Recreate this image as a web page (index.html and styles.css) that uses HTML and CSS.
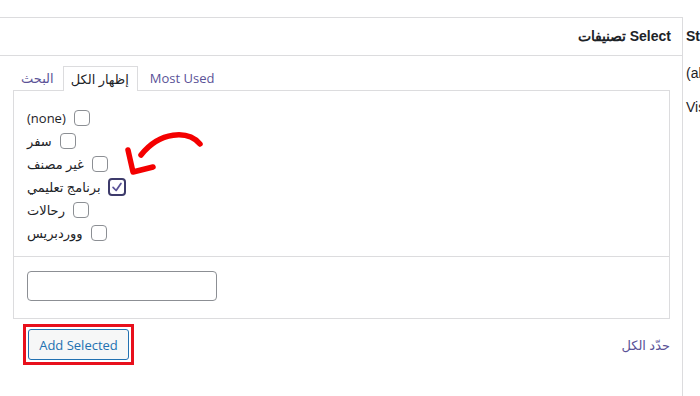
FILE: index.html
```html
<!DOCTYPE html>
<html lang="ar">

<head>
    <meta charset="UTF-8">
    <meta name="viewport" content="width=device-width, initial-scale=1.0">
    <title>Select تصنيفات</title>
    <link rel="stylesheet" href="styles.css">
</head>

<body>
    <div class="page">
        <div class="panel">
            <div class="panel-head" dir="rtl">Select تصنيفات</div>
            <div class="panel-body">
                <ul class="tabs">
                    <li><a href="#">البحث</a></li>
                    <li class="active"><span>إظهار الكل</span></li>
                    <li><a href="#">Most Used</a></li>
                </ul>
                <ul class="tabs-panel">
                    <li><span>(none)</span><i class="box"></i></li>
                    <li><span>سفر</span><i class="box"></i></li>
                    <li><span>غير مصنف</span><i class="box"></i></li>
                    <li><span>برنامج تعليمي</span><i class="box checked"><svg viewBox="0 0 16 16"><path d="M3.5 8.5 L7 12 L12.5 4"/></svg></i></li>
                    <li><span>رحالات</span><i class="box"></i></li>
                    <li><span>ووردبريس</span><i class="box"></i></li>
                </ul>
                <div class="search-box">
                    <input type="text" class="search-input">
                </div>
                <div class="actions">
                    <span class="highlight"><button class="button">Add Selected</button></span>
                    <a href="#" class="select-all">حدّد الكل</a>
                </div>

                <!-- annotation arrow -->
                <svg class="arrow" viewBox="0 0 90 55">
                    <path d="M80 19 C68 5 40 6 21 30" />
                    <path d="M8 25 L13 47 L33 42" />
                </svg>
            </div>
        </div>
        <div class="side">
            <p class="side-title">Status</p>
            <p>(all)</p>
            <p>Visibility</p>
        </div>
    </div>
</body>

</html>
```

FILE: styles.css
```css
:root {
    --border-color: #dcdcde;
    --link-color: #5a5297;
    --blue: #2271b1;
}

body {
    margin: 0;
    font-family: 'Open Sans', 'DejaVu Sans', sans-serif;
    font-size: 13px;
    color: #1d2327;
    background: #fff;
    overflow: hidden;
}

.page {
    display: flex;
    padding-top: 17px;
    width: 700px;
    height: 379px;
    overflow: hidden;
}

.panel {
    width: 682px;
    flex: none;
    margin-left: -1px;
    border: 1px solid var(--border-color);
    border-bottom: none;
}

.panel-head {
    height: 37px;
    line-height: 37px;
    padding: 0 11px;
    border-bottom: 1px solid var(--border-color);
    font-family: 'Liberation Sans', Arial, sans-serif;
    font-size: 14px;
    font-weight: 700;
    text-align: right;
}

.panel-body {
    position: relative;
    padding: 9px 12px 0 13px;
}

/* tabs */
.tabs {
    display: flex;
    list-style: none;
    margin: 0;
    padding: 0 0 0 1px;
    height: 25px;
}

.tabs li {
    display: flex;
    align-items: center;
    padding: 0 6px;
    margin-right: 2px;
    border: 1px solid transparent;
    border-bottom: none;
}

.tabs li.active {
    border-color: var(--border-color);
    background: #fff;
    position: relative;
    top: 1px;
    height: 24px;
    padding: 0 8px 0 7px;
    margin-right: 3px;
}

.tabs li.active+li {
    padding-left: 8px;
}

.tabs a {
    color: var(--link-color);
    text-decoration: none;
}

.tabs-panel {
    list-style: none;
    margin: 0;
    padding: 15px 13px 12px;
    border: 1px solid var(--border-color);
}

.tabs-panel li {
    display: flex;
    align-items: center;
    height: 23px;
}

.box {
    box-sizing: border-box;
    width: 16px;
    height: 16px;
    margin-left: 8px;
    border: 1px solid #8c8f94;
    border-radius: 4px;
    background: #fff;
}

.box.checked {
    width: 18px;
    height: 18px;
    border: 2px solid #3d3b6b;
    margin-left: 7px;
    margin-top: 1px;
}

.box svg {
    display: block;
    width: 14px;
    height: 14px;
    fill: none;
    stroke: #5a5297;
    stroke-width: 2;
    stroke-linecap: round;
    stroke-linejoin: round;
}

/* search */
.search-box {
    border: 1px solid var(--border-color);
    border-top: none;
    padding: 14px 13px 17px;
}

.search-input {
    display: block;
    box-sizing: border-box;
    width: 190px;
    height: 30px;
    margin: 0;
    border: 1px solid #8c8f94;
    border-radius: 4px;
}

/* actions */
.actions {
    display: flex;
    justify-content: space-between;
    align-items: center;
    padding: 5px 0 0 10px;
}

.highlight {
    display: inline-block;
    line-height: 0;
    padding: 2px;
    border: 3px solid #e8101c;
}

.button {
    font-family: inherit;
    font-size: 13px;
    color: var(--blue);
    background: #f6f7f7;
    border: 1px solid var(--blue);
    border-radius: 3px;
    height: 31px;
    width: 101px;
    padding: 0;
}

.select-all {
    color: var(--link-color);
    text-decoration: none;
    margin-top: 1px;
}

.arrow {
    position: absolute;
    left: 120px;
    top: 69px;
    width: 90px;
    height: 55px;
    fill: none;
    stroke: #f40000;
    stroke-width: 5.5;
    stroke-linecap: round;
    stroke-linejoin: round;
}

/* right column (cut off by the window) */
.side {
    padding-left: 3px;
    font-family: 'Liberation Sans', Arial, sans-serif;
    font-size: 14px;
    white-space: nowrap;
}

.side p {
    margin: 0;
    height: 34px;
    line-height: 16px;
}

.side .side-title {
    font-weight: 700;
    padding-top: 11px;
    height: 37px;
}
```
